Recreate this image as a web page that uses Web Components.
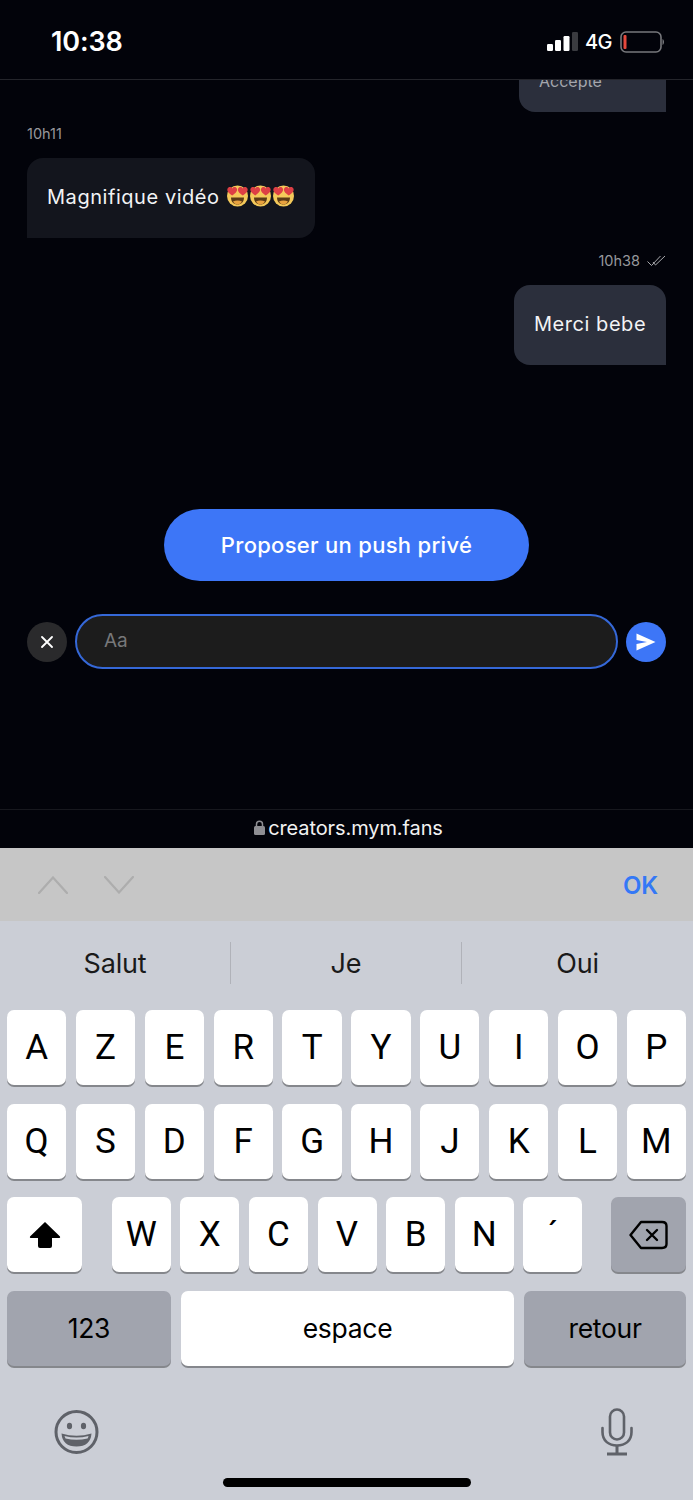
<!DOCTYPE html>
<html lang="fr">
<head>
<meta charset="utf-8">
<title>Messages</title>
<style>
    html, body { margin: 0; padding: 0; background: #02030a; }
    body { width: 693px; height: 1500px; overflow: hidden; display: flex; flex-direction: column; font-family: "Liberation Sans", sans-serif; }
</style>
</head>
<body>
<status-bar></status-bar>
<chat-view>
    <chat-bubble side="out" clipped muted>Accepté</chat-bubble>
    <chat-stamp>10h11</chat-stamp>
    <chat-bubble side="in">Magnifique vidéo <heart-eyes></heart-eyes><heart-eyes></heart-eyes><heart-eyes></heart-eyes></chat-bubble>
    <chat-stamp side="out" seen>10h38</chat-stamp>
    <chat-bubble side="out">Merci bebe</chat-bubble>
    <push-button>Proposer un push privé</push-button>
    <chat-composer placeholder="Aa"></chat-composer>
</chat-view>
<url-bar>creators.mym.fans</url-bar>
<kb-accessory></kb-accessory>
<ios-keyboard></ios-keyboard>

<script>
function mkTmplt(innerHtml) {
    var tmplt = document.createElement("template");
    tmplt.innerHTML = innerHtml;
    return tmplt;
}

function define(name, html, proto) {
    const tmplt = mkTmplt(html);
    class El extends HTMLElement {
        constructor() {
            super();
            const shadow = this.attachShadow({ mode: "open" });
            shadow.append(tmplt.content.cloneNode(true));
        }
        connectedCallback() {
            if (proto) proto.call(this, this.shadowRoot);
        }
    }
    customElements.define(name, El);
}

define("status-bar", `
    <style>
        :host { display: flex; align-items: center; box-sizing: border-box; flex: none; height: 80px; padding: 4px 28px 0 51px; border-bottom: 1px solid #24252b; background: #02030a; color: #fff; }
        .time { font: 600 27px/1 Inter, sans-serif; letter-spacing: -0.1px; flex: 1; }
        .net { font: 500 20px/1 Inter, sans-serif; margin: 0 8px 0 7px; letter-spacing: -0.5px; }
        svg { display: block; }
    </style>
    <span class="time">10:38</span>
    <svg width="31" height="20" viewBox="0 0 31 20">
        <rect x="0" y="12" width="6" height="7" rx="1.2" fill="#fff"/>
        <rect x="8" y="8" width="6" height="11" rx="1.2" fill="#fff"/>
        <rect x="16.500" y="4" width="6" height="15" rx="1.2" fill="#fff"/>
        <rect x="25" y="0" width="6" height="19" rx="1.2" fill="#3a3b40"/>
    </svg>
    <span class="net">4G</span>
    <svg width="45" height="22" viewBox="0 0 45 22">
        <rect x="1" y="1" width="40" height="20" rx="5" fill="none" stroke="#77787c" stroke-width="1.6"/>
        <rect x="3.500" y="4" width="3" height="14" rx="1" fill="#e5483c"/>
        <path d="M42.500 8 c2 1 2 5 0 6z" fill="#77787c"/>
    </svg>
`);

define("chat-view", `
    <style>
        :host { display: flex; flex-direction: column; flex: none; height: 729px; box-sizing: border-box; padding: 0 27px; overflow: hidden; background: #02030a; }
    </style>
    <slot></slot>
`);

define("chat-bubble", `
    <style>
        :host { display: block; box-sizing: border-box; height: 80px; padding: 0 20px; font: 400 20px/78px Inter, sans-serif; color: #f2f3f5; white-space: nowrap; letter-spacing: 0.55px; }
        :host([side="in"]) { align-self: flex-start; width: 288px; margin-top: 14px; background: #13151d; border-radius: 16px 16px 16px 0; }
        :host([side="out"]) { align-self: flex-end; width: 152px; margin-top: 14px; background: #2b2f3c; border-radius: 16px 16px 0 16px; }
        :host([clipped]) { width: 147px; height: 62px; margin-top: -30px; line-height: 62px; }
        :host([muted]) { color: #a4a6ad; font-size: 16px; letter-spacing: 0; }
    </style>
    <slot></slot>
`);

define("heart-eyes", `
    <style>
        :host { display: inline-block; width: 23px; height: 23px; vertical-align: -3px; letter-spacing: 0; }
        svg { display: block; }
    </style>
    <svg width="23" height="23" viewBox="0 0 23 23">
        <circle cx="11.500" cy="12" r="10.500" fill="#f4c95a"/>
        <path d="M5 13.500 h13 c0 4.500 -3 7 -6.500 7 s-6.500 -2.500 -6.500 -7z" fill="#5a3a16"/>
        <path d="M7 17.500 c2.500 -1.500 6.500 -1.500 9 0 c-1 2 -2.800 3 -4.500 3 s-3.500 -1 -4.500 -3z" fill="#e8a23f"/>
        <path d="M6.200 11.500 C2 8.800 .8 6.800 1.500 4.800 C2.300 2.700 5 2.500 6.200 4.500 C7.500 2.500 10.200 2.700 10.900 4.800 C11.600 6.800 10.400 8.800 6.200 11.500z" fill="#dd3f45"/>
        <path d="M16.800 11.500 C12.600 8.800 11.400 6.800 12.100 4.800 C12.800 2.700 15.500 2.500 16.800 4.500 C18 2.500 20.700 2.700 21.500 4.800 C22.200 6.800 21 8.800 16.800 11.500z" fill="#dd3f45"/>
    </svg>
`);

define("chat-stamp", `
    <style>
        :host { display: flex; align-items: center; gap: 7px; height: 20px; font: 400 14.500px/20px Inter, sans-serif; color: #97989c; margin-top: 12px; letter-spacing: 0; }
        :host([side="out"]) { align-self: flex-end; margin-top: 13px; }
        svg { display: none; }
        :host([seen]) svg { display: block; }
    </style>
    <slot></slot>
    <svg width="19" height="12" viewBox="0 0 19 12" fill="none" stroke="#a8a9ad" stroke-width="1">
        <path d="M.5 6.500 L4.500 10.500 L13.500 1"/>
        <path d="M6 7 L8.500 10 L18 1"/>
    </svg>
`);

define("push-button", `
    <style>
        :host { display: flex; align-items: center; justify-content: center; align-self: center; box-sizing: border-box; width: 365px; height: 72px; margin-top: 144px; border-radius: 36px; background: #3d76f7; color: #fff; font: 500 22px/1 Inter, sans-serif; letter-spacing: 0.3px; }
    </style>
    <slot></slot>
`);

define("chat-composer", `
    <style>
        :host { display: flex; align-items: center; gap: 8px; margin-top: 33px; }
        .round { flex: none; display: flex; align-items: center; justify-content: center; width: 40px; height: 40px; border-radius: 50%; }
        .close { background: #2a2a2c; }
        .send { background: #3d76f7; }
        .field { flex: 1; box-sizing: border-box; height: 55px; border: 2px solid #3568d8; border-radius: 28px; background: #1c1c1c; padding: 0 27px 2px; display: flex; align-items: center; color: #77787a; font: 400 19px/1 Inter, sans-serif; }
        svg { display: block; }
    </style>
    <div class="round close">
        <svg width="12" height="12" viewBox="0 0 12 12"><path d="M1 1 L11 11 M11 1 L1 11" stroke="#fff" stroke-width="1.800" stroke-linecap="round"/></svg>
    </div>
    <div class="field" id="field"></div>
    <div class="round send">
        <svg width="20" height="18" viewBox="0 0 20 18"><path d="M0.500 0.500 L19.500 9 L0.500 17.500 L0.500 11 L11 9 L0.500 7z" fill="#fff"/></svg>
    </div>
`, function (root) {
    root.querySelector("#field").textContent = this.getAttribute("placeholder");
});

define("url-bar", `
    <style>
        :host { display: flex; align-items: center; justify-content: center; gap: 3px; box-sizing: border-box; flex: none; height: 39px; border-top: 1px solid #17181e; background: #02030a; color: #f2f2f2; font: 400 20px/1 Inter, sans-serif; letter-spacing: -0.1px; padding: 0 0 3px 4px; }
        svg { display: block; }
    </style>
    <svg width="11" height="15" viewBox="0 0 11 15">
        <path d="M2.500 7 V4.200 a3 3 0 0 1 6 0 V7" fill="none" stroke="#8e8e93" stroke-width="1.500"/>
        <rect x="0" y="6" width="11" height="9" rx="1.500" fill="#8e8e93"/>
    </svg>
    <slot></slot>
`);

define("kb-accessory", `
    <style>
        :host { display: flex; align-items: center; gap: 36px; box-sizing: border-box; flex: none; height: 73px; padding: 0 35px 0 38px; background: #c6c6c6; }
        svg { display: block; }
        .ok { margin-left: auto; color: #3478f6; font: 600 24px/1 Inter, sans-serif; padding-top: 2px; letter-spacing: -0.2px; }
    </style>
    <svg width="30" height="18" viewBox="0 0 30 18" fill="none" stroke="#adadad" stroke-width="2.200" stroke-linecap="round"><path d="M1 17 L15 1.500 L29 17"/></svg>
    <svg width="30" height="18" viewBox="0 0 30 18" fill="none" stroke="#adadad" stroke-width="2.200" stroke-linecap="round"><path d="M1 1 L15 16.500 L29 1"/></svg>
    <span class="ok">OK</span>
`);

define("kb-key", `
    <style>
        :host { display: flex; align-items: center; justify-content: center; box-sizing: border-box; height: 75px; border-radius: 7px; background: #fff; box-shadow: 0 2px 0 #85878c; color: #000; font: 400 35px/1 Roboto, sans-serif; min-width: 0; }
        :host([fn]) { background: #a1a4ae; }
        :host([small]) { font: 400 26.500px/1 Inter, sans-serif; letter-spacing: -0.3px; }
    </style>
    <slot></slot>
`);

const row = letters => letters.split("").map(l => `<kb-key>${l}</kb-key>`).join("");

define("ios-keyboard", `
    <style>
        :host { display: block; flex: 1; background: #cbced6; padding: 0 7px; box-sizing: border-box; position: relative; }
        .suggest { display: grid; grid-template-columns: 230px 231px 232px; height: 89px; margin: 0 -7px; font: 400 27px/1 Inter, sans-serif; color: #1a1a1a; letter-spacing: -0.2px; }
        .suggest span { display: flex; align-items: center; justify-content: center; height: 42px; margin-top: 21px; border-left: 1px solid #b0b2b9; }
        .suggest span:first-child { border-left: 0; }
        .rows { display: flex; flex-direction: column; gap: 18.700px; }
        .r10 { display: grid; grid-template-columns: repeat(10, 1fr); gap: 9.600px; }
        .r3 { display: flex; justify-content: space-between; }
        .r3 .mid { display: grid; grid-template-columns: repeat(7, 59px); gap: 9.600px; margin-left: 1px; }
        .wide { width: 75px; }
        .r4 { display: grid; grid-template-columns: 164px 1fr 162px; gap: 10px; }
        .tools { display: flex; justify-content: space-between; align-items: center; padding: 42px 53px 0 47px; }
        .home { position: absolute; left: 223px; bottom: 13px; width: 248px; height: 9px; border-radius: 5px; background: #000; }
        svg { display: block; }
    </style>
    <div class="suggest"><span>Salut</span><span>Je</span><span>Oui</span></div>
    <div class="rows">
        <div class="r10">${row("AZERTYUIOP")}</div>
        <div class="r10">${row("QSDFGHJKLM")}</div>
        <div class="r3">
            <kb-key class="wide">
                <svg width="32" height="28" viewBox="0 0 32 28"><path d="M16 1 L31 15.500 Q31.500 16.500 30.500 17 L23 17 L23 25 Q23 27 21 27 L11 27 Q9 27 9 25 L9 17 L1.500 17 Q.5 16.500 1 15.500z" fill="#000"/></svg>
            </kb-key>
            <div class="mid">${row("WXCVBN´")}</div>
            <kb-key class="wide" fn>
                <svg width="39" height="30" viewBox="0 0 39 30" fill="none" stroke="#000" stroke-width="2.400" stroke-linejoin="round" stroke-linecap="round">
                    <path d="M12 2 H33 Q37.500 2 37.500 6 V24 Q37.500 28 33 28 H12 L1.500 15z"/>
                    <path d="M18 10 L28 20 M28 10 L18 20"/>
                </svg>
            </kb-key>
        </div>
        <div class="r4">
            <kb-key fn small>123</kb-key>
            <kb-key small>espace</kb-key>
            <kb-key fn small>retour</kb-key>
        </div>
    </div>
    <div class="tools">
        <svg width="45" height="46" viewBox="0 0 45 46">
            <circle cx="22.500" cy="23" r="20.500" fill="none" stroke="#5f6269" stroke-width="3"/>
            <ellipse cx="15.500" cy="17" rx="2.600" ry="3.200" fill="#5f6269"/>
            <ellipse cx="29.500" cy="17" rx="2.600" ry="3.200" fill="#5f6269"/>
            <path d="M7.500 24.500 Q22.500 29 37.500 24.500 Q36.500 37.500 22.500 37.500 Q8.500 37.500 7.500 24.500z" fill="#5f6269"/>
            <path d="M10.500 27 Q22.500 30 34.500 27 Q34 29 33.500 29.500 Q22.500 32 11.500 29.500z" fill="#cbced6"/>
        </svg>
        <svg width="32" height="48" viewBox="0 0 32 48" fill="none" stroke="#5f6269" stroke-width="2.600">
            <rect x="9" y="1.500" width="14" height="30" rx="7"/>
            <path d="M1.500 20 V24 C1.500 33 8 37.500 16 37.500 S30.500 33 30.500 24 V20" stroke-linecap="round"/>
            <path d="M16 37.500 V45.500 M6 46 H26" stroke-width="3"/>
        </svg>
    </div>
    <div class="home"></div>
`);
</script>
</body>
</html>
